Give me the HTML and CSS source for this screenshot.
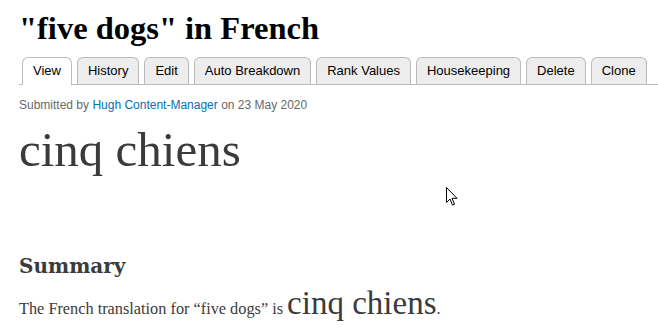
FILE: index.html
```html
<!DOCTYPE html>
<html>
<head>
<meta charset="utf-8">
<link rel="stylesheet" href="styles.css">
</head>
<body>
<div class="page">
  <h1 class="title">"five dogs" in French</h1>
  <ul class="tabs">
    <li class="tab active">View</li>
    <li class="tab">History</li>
    <li class="tab">Edit</li>
    <li class="tab">Auto Breakdown</li>
    <li class="tab">Rank Values</li>
    <li class="tab">Housekeeping</li>
    <li class="tab">Delete</li>
    <li class="tab">Clone</li>
  </ul>
  <div class="meta">Submitted by <span class="link">Hugh Content-Manager</span> on 23 May 2020</div>
  <div class="word">cinq chiens</div>
  <h2 class="summary">Summary</h2>
  <p class="body">The French translation for “five dogs” is <span class="big">cinq chiens</span>.</p>
</div>
<svg class="cursor" width="13" height="20" viewBox="0 0 13 20">
  <path d="M0.5 0.5 L0.5 15.5 L4 12 L6.5 18 L8.5 17.2 L6 11.3 L11 11.3 Z" fill="#fff" stroke="#000" stroke-width="1" stroke-linejoin="miter"/>
</svg>
</body>
</html>
```
FILE: styles.css
```css
html, body {
  margin: 0;
  padding: 0;
  background: #fff;
}
.page {
  padding: 0 0 0 19px;
}
.title {
  margin: 0;
  padding-top: 10px;
  font-family: "Liberation Serif", Georgia, serif;
  font-weight: bold;
  font-size: 32.5px;
  line-height: 36px;
  color: #000;
}
.tabs {
  list-style: none;
  margin: 11px 0 0 0;
  padding: 0 0 0 3px;
  display: flex;
  border-bottom: 1px solid #bbb;
  height: 27px;
}
.tab {
  font-family: "Liberation Sans", Arial, sans-serif;
  font-size: 13px;
  line-height: 25px;
  height: 26px;
  padding: 0 10px;
  margin-right: 5px;
  border: 1px solid #bbb;
  border-bottom: none;
  border-radius: 6px 6px 0 0;
  background: #ededed;
  color: #000;
}
.tab.active {
  background: #fff;
  height: 27px;
}
.meta {
  margin-top: 12px;
  font-family: "Liberation Sans", Arial, sans-serif;
  font-size: 12px;
  line-height: 16px;
  color: #68696b;
}
.link {
  color: #0071b3;
}
.word {
  margin-top: 9px;
  font-family: "Liberation Serif", Georgia, serif;
  font-size: 49px;
  line-height: 56px;
  color: #3b3b3b;
}
.summary {
  margin: 76px 0 0 0;
  font-family: "DejaVu Serif", Georgia, serif;
  font-weight: bold;
  font-size: 20px;
  line-height: 24px;
  color: #3b3b3b;
}
.body {
  margin: 7px 0 0 0;
  font-family: "Liberation Serif", Georgia, serif;
  font-size: 16.3px;
  line-height: 36px;
  color: #3b3b3b;
}
.big {
  font-size: 33px;
}
.cursor {
  position: absolute;
  left: 446px;
  top: 187px;
}
```
